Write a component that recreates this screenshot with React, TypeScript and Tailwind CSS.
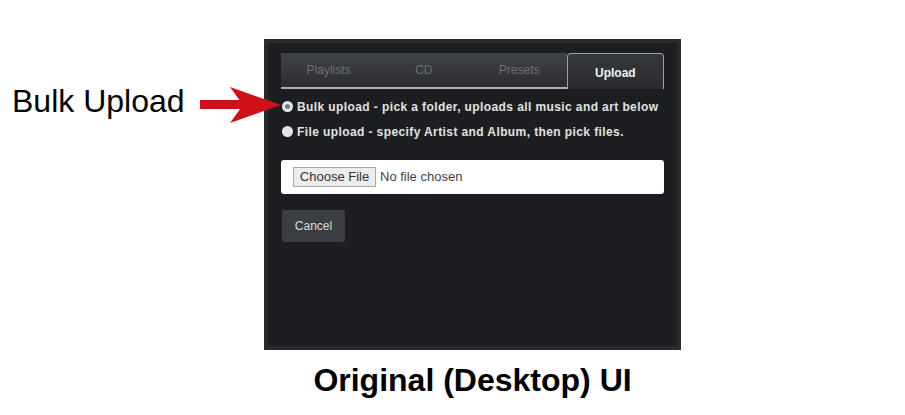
import React from 'react';

const tabs = ['Playlists', 'CD', 'Presets', 'Upload'];

const options = [
  { label: 'Bulk upload - pick a folder, uploads all music and art below', checked: true },
  { label: 'File upload - specify Artist and Album, then pick files.', checked: false },
];

const Radio: React.FC<{ checked: boolean }> = ({ checked }) => (
  <span className="flex h-[11px] w-[11px] shrink-0 items-center justify-center rounded-full bg-[#e6e6e6]">
    {checked && <span className="h-[5px] w-[5px] rounded-full bg-[#7a7a7a]" />}
  </span>
);

const App: React.FC = () => {
  return (
    <div className="relative h-[415px] w-[905px] overflow-hidden bg-white font-['Liberation_Sans',Arial,sans-serif]">
      {/* Annotation */}
      <div className="absolute left-[12px] top-[83px] text-[32px] leading-[36px] text-black">Bulk Upload</div>
      <svg className="absolute left-[198px] top-[85px] z-10" width="86" height="40" viewBox="0 0 86 40">
        <rect x="2" y="15" width="44" height="9" fill="#cf1019" />
        <polygon points="32,2 83,20 32,38 45,20" fill="#cf1019" />
      </svg>

      <div className="ml-[264px] flex w-[417px] flex-col items-center pt-[39px]">
        {/* Panel */}
        <div className="h-[311px] w-full border-[4px] border-[#2a2b2e] bg-[#1d1e21] px-[13px] pt-[10px]">
          <div className="flex h-[36px]">
            {tabs.map((t) =>
              t === 'Upload' ? (
                <div
                  key={t}
                  className="flex flex-1 items-center justify-center rounded-t-[4px] border border-b-0 border-[#a0a0a0] bg-gradient-to-b from-[#34373b] to-[#2a2c30] pt-[3px] text-[12px] font-bold text-[#f2f2f2]"
                >
                  {t}
                </div>
              ) : (
                <div
                  key={t}
                  className="flex flex-1 items-center justify-center border-b-2 border-[#b0b0b0] bg-gradient-to-b from-[#3f4246] to-[#2b2d31] text-[12px] text-[#6c6f73]"
                >
                  {t}
                </div>
              )
            )}
          </div>

          <div className="mt-[5px] flex flex-col">
            {options.map((o) => (
              <div key={o.label} className="flex h-[25px] items-center gap-[4px] pl-[1px]">
                <Radio checked={o.checked} />
                <span className="whitespace-nowrap text-[12px] font-bold tracking-[0.4px] text-[#e2e2e2]">{o.label}</span>
              </div>
            ))}
          </div>

          <div className="mt-[16px] flex h-[34px] items-center rounded-[3px] bg-white pl-[12px]">
            <span className="flex h-[20px] w-[83px] items-center justify-center border border-[#a9a9a9] bg-[#ececec] text-[13px] text-[#333]">
              Choose File
            </span>
            <span className="ml-[4px] text-[13px] text-[#444]">No file chosen</span>
          </div>

          <button className="mt-[16px] ml-[1px] flex h-[32px] w-[63px] items-center justify-center rounded-[2px] bg-[#3a3d41] text-[12px] text-[#dedede]">
            Cancel
          </button>
        </div>

        <div className="mt-[12px] text-[32px] font-bold leading-[36px] text-black">Original (Desktop) UI</div>
      </div>
    </div>
  );
};

export default App;
